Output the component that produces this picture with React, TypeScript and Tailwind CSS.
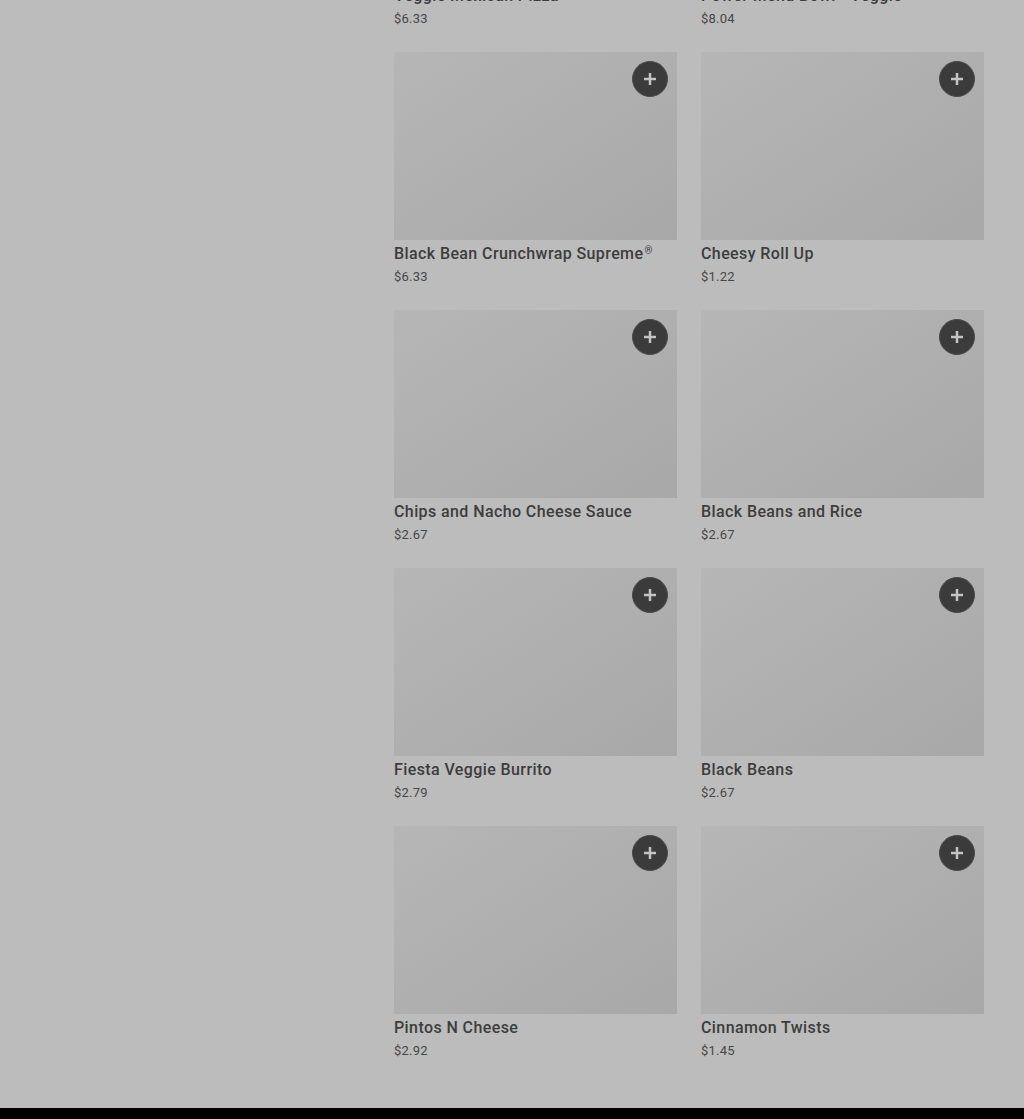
import React from "react";

const items = [
  { name: "Veggie Mexican Pizza", price: "$6.33" },
  { name: "Power Menu Bowl - Veggie", price: "$8.04" },
  { name: "Black Bean Crunchwrap Supreme", price: "$6.33", reg: true },
  { name: "Cheesy Roll Up", price: "$1.22" },
  { name: "Chips and Nacho Cheese Sauce", price: "$2.67" },
  { name: "Black Beans and Rice", price: "$2.67" },
  { name: "Fiesta Veggie Burrito", price: "$2.79" },
  { name: "Black Beans", price: "$2.67" },
  { name: "Pintos N Cheese", price: "$2.92" },
  { name: "Cinnamon Twists", price: "$1.45" },
];

function Card({ name, price, reg }: { name: string; price: string; reg?: boolean }) {
  return (
    <div className="flex flex-col">
      <div className="relative h-[188px] bg-gradient-to-br from-[#b6b6b6] to-[#a8a8a8]">
        <button className="absolute right-[9px] top-[9px] flex h-[36px] w-[36px] items-center justify-center rounded-full bg-[#3b3b3b] border border-[#4a4a4a]">
          <svg width="12" height="12" viewBox="0 0 12 12">
            <rect x="4.75" y="0" width="2.5" height="12" fill="#c4c4c4" />
            <rect x="0" y="4.75" width="12" height="2.5" fill="#c4c4c4" />
          </svg>
        </button>
      </div>
      <div className="mt-[2px] text-[16px] leading-[24px] font-medium tracking-[0.4px] text-[#3d3d3d]">
        {name}
        {reg && <span className="ml-px inline-block text-[10px] leading-none align-[5px] text-[#3d3d3d]">®</span>}
      </div>
      <div className="mt-[2px] text-[13px] leading-[18px] tracking-[0.2px] text-[#474747]">{price}</div>
    </div>
  );
}

export default function App() {
  return (
    <div
      className="flex min-h-[1119px] flex-col bg-[#bcbcbc] overflow-hidden"
      style={{ fontFamily: "Roboto, 'Liberation Sans', sans-serif" }}
    >
      <div className="flex flex-1">
        <div className="w-[394px] shrink-0" />
        <div className="-mt-[206px] grid w-[590px] grid-cols-2 gap-x-[24px] gap-y-[24px] pb-[48px]">
          {items.map((it) => (
            <Card key={it.name} {...it} />
          ))}
        </div>
      </div>
      <div className="h-[12px] bg-black" />
    </div>
  );
}
